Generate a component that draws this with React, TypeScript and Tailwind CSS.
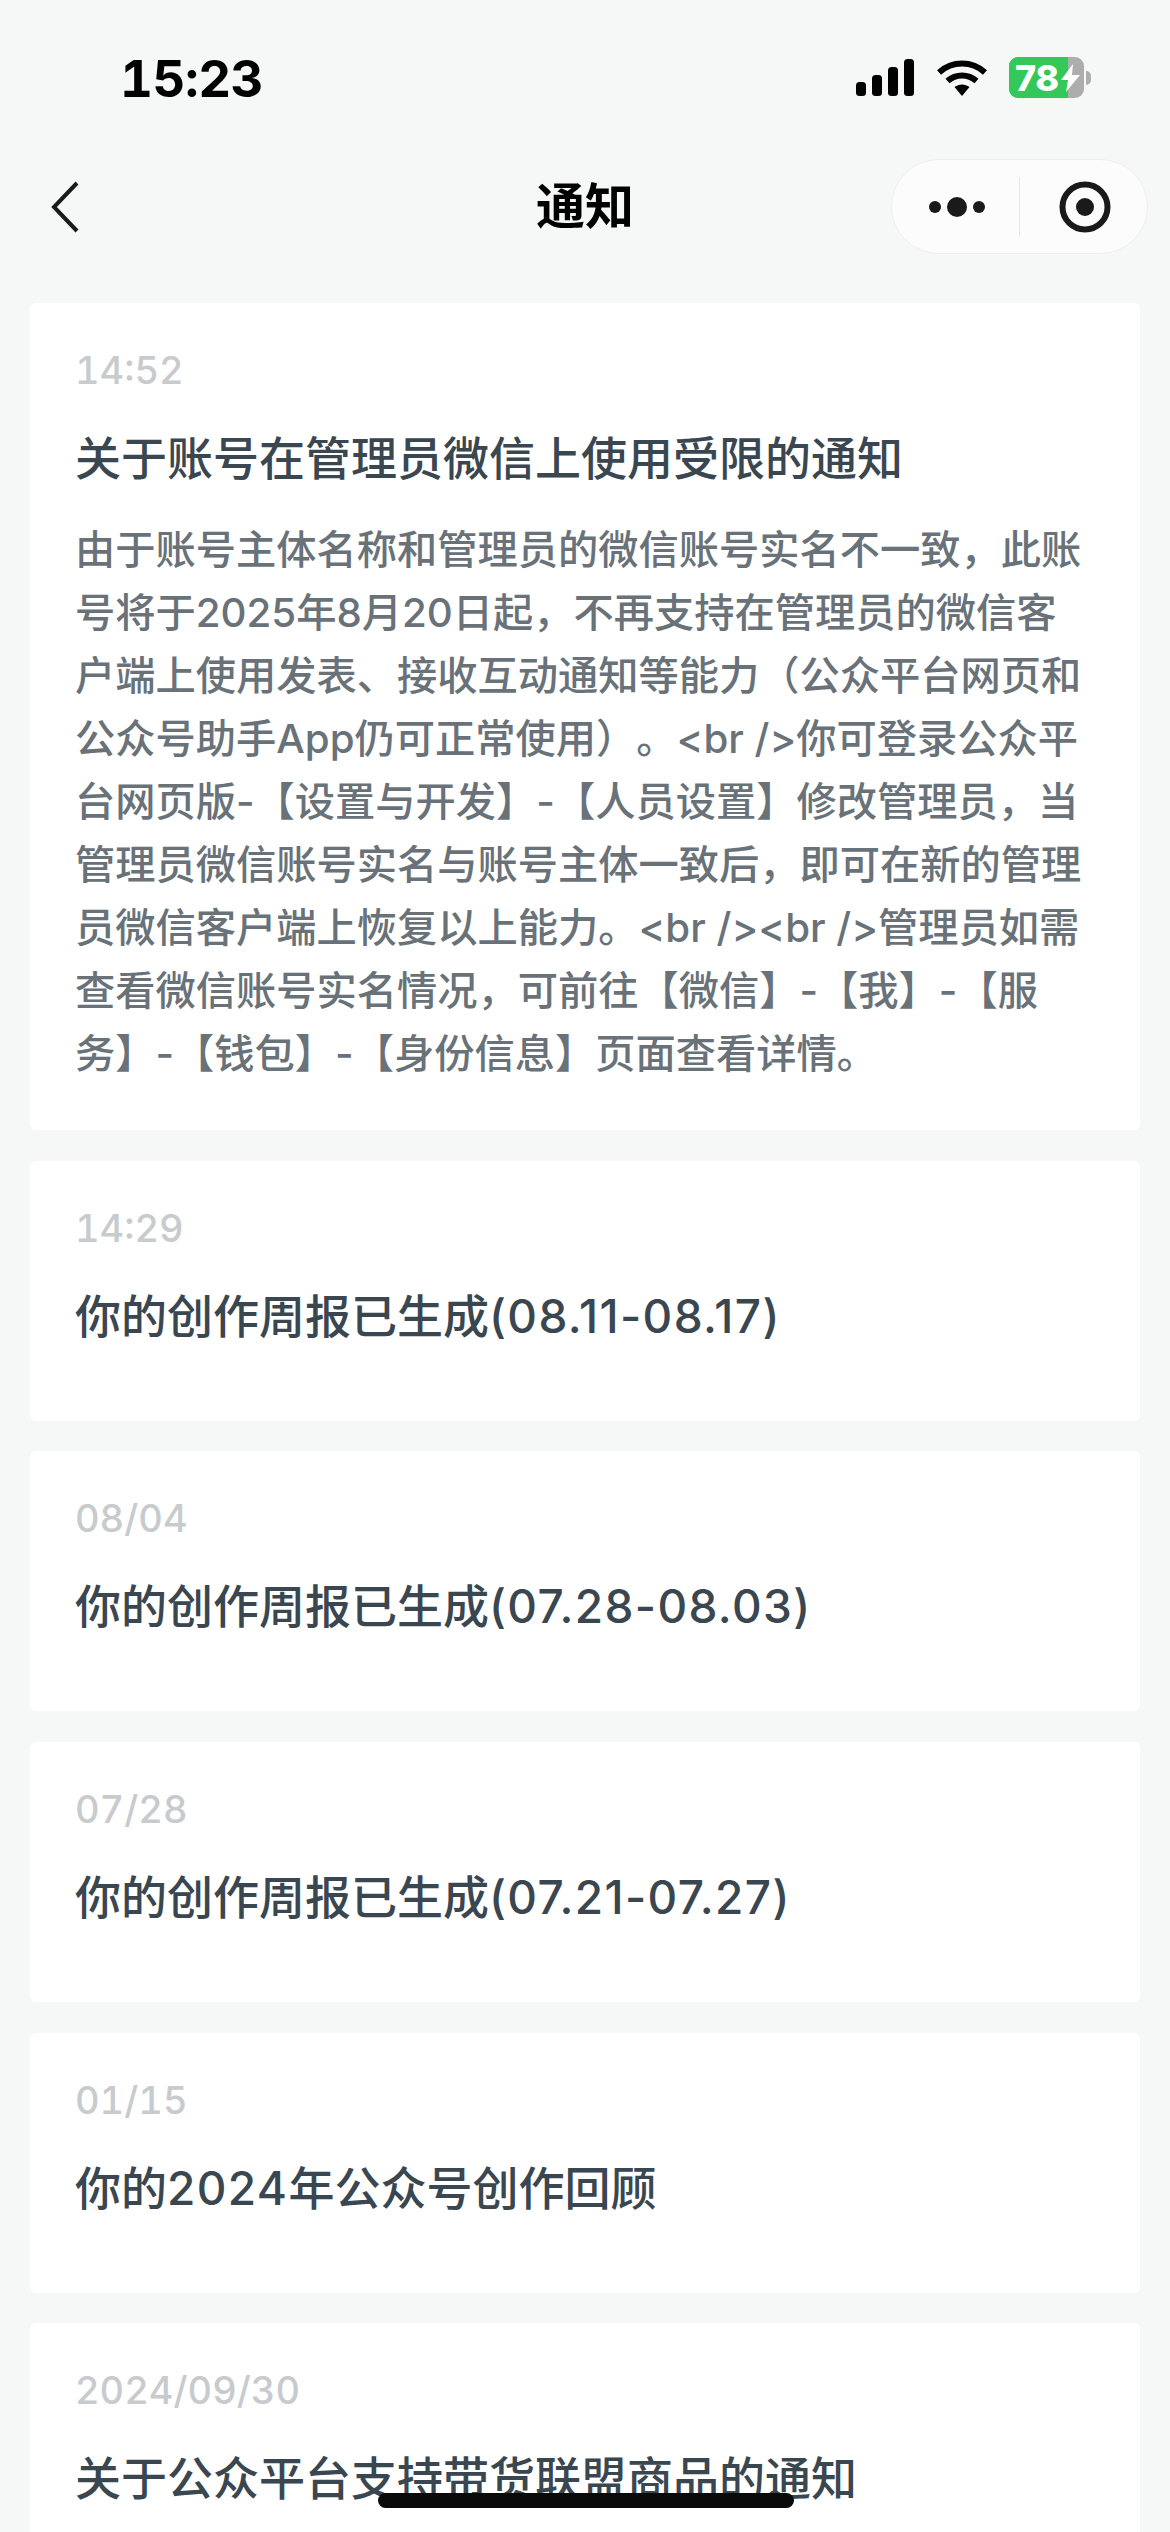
import React from 'react';

const FONT = 'font-["Inter","Noto_Sans_CJK_SC",sans-serif]';

const bodyLines = [
  '由于账号主体名称和管理员的微信账号实名不一致，此账',
  '号将于2025年8月20日起，不再支持在管理员的微信客',
  '户端上使用发表、接收互动通知等能力（公众平台网页和',
  '公众号助手App仍可正常使用）。<br />你可登录公众平',
  '台网页版-【设置与开发】-【人员设置】修改管理员，当',
  '管理员微信账号实名与账号主体一致后，即可在新的管理',
  '员微信客户端上恢复以上能力。<br /><br />管理员如需',
  '查看微信账号实名情况，可前往【微信】-【我】-【服',
  '务】-【钱包】-【身份信息】页面查看详情。',
];

const notices = [
  { time: '14:29', title: '你的创作周报已生成(08.11-08.17)' },
  { time: '08/04', title: '你的创作周报已生成(07.28-08.03)' },
  { time: '07/28', title: '你的创作周报已生成(07.21-07.27)' },
  { time: '01/15', title: '你的2024年公众号创作回顾' },
  { time: '2024/09/30', title: '关于公众平台支持带货联盟商品的通知' },
];

// digits in the titles sit a bit wider than Inter's default
const Mixed = ({ text }: { text: string }) => (
  <>
    {text.split(/([\x20-\x7e]+)/).map((part, i) =>
      i % 2 === 1 ? (
        <span key={i} className="tracking-[0.03em]">{part}</span>
      ) : (
        part
      ),
    )}
  </>
);

const StatusIcons = () => (
  <div className="flex items-center">
    <svg width="58" height="37" viewBox="0 0 58 37" fill="#000">
      <rect x="0" y="23" width="10" height="14" rx="3.5" />
      <rect x="16" y="16" width="10" height="21" rx="3.5" />
      <rect x="32" y="8" width="10" height="29" rx="3.5" />
      <rect x="48" y="0" width="10" height="37" rx="3.5" />
    </svg>
    <svg className="ml-[23px]" width="50" height="37" viewBox="0 0 50 37" fill="none">
      <path d="M2 13.5C15 1.5 35 1.5 48 13.5" stroke="#000" strokeWidth="6" />
      <path d="M10.5 22C19 14.5 31 14.5 39.5 22" stroke="#000" strokeWidth="6" />
      <path d="M17.5 28C22 24.5 28 24.5 32.500 28L25 37Z" fill="#000" />
    </svg>
    <div className="relative ml-[22px] flex h-[41px] w-[75px] items-center overflow-hidden rounded-[9px] bg-[#adadad]">
      <div className="absolute inset-y-0 left-0 w-[59px] bg-[#34c759]" />
      <span className="relative pl-[6px] text-[36px] leading-none font-extrabold text-white tracking-[-0.5px]">78</span>
      <svg className="absolute left-[52px] top-[7px]" width="19" height="28" viewBox="0 0 19 28" fill="#fff">
        <path d="M12 0 0 16h7L5 28 19 11h-8Z" />
      </svg>
    </div>
    <div className="ml-[2px] h-[14px] w-[5px] rounded-r-full bg-[#adadad]" />
  </div>
);

const Capsule = () => (
  <div className="flex h-[95px] w-[257px] items-center rounded-full border border-[#eeeeee] bg-[#fcfcfc]">
    <div className="flex flex-1 justify-center pl-[3px]">
      <svg width="56" height="20" viewBox="0 0 56 20" fill="#1a1a1a">
        <circle cx="6" cy="10" r="6" />
        <circle cx="28" cy="10" r="10" />
        <circle cx="50" cy="10" r="6" />
      </svg>
    </div>
    <div className="h-[60px] w-px bg-[#e6e6e6]" />
    <div className="flex flex-1 justify-center pl-[3px]">
      <svg width="52" height="52" viewBox="0 0 52 52" fill="none">
        <circle cx="26" cy="26" r="22.500" stroke="#1a1a1a" strokeWidth="6" />
        <circle cx="26" cy="26" r="9" fill="#1a1a1a" />
      </svg>
    </div>
  </div>
);

export default function App() {
  return (
    <div className={`relative h-[2532px] w-[1170px] overflow-hidden bg-[#f6f8f8] ${FONT}`}>
      <div className="flex h-[159px] items-start justify-between pl-[120px] pr-[79px] pt-[57px]">
        <div className="text-[51px] leading-[44px] font-bold tabular-nums tracking-[-0.5px] text-black">15:23</div>
        <StatusIcons />
      </div>

      <div className="relative flex h-[95px] items-center justify-end pr-[22px]">
        <svg className="absolute left-[50px] top-[22px]" width="30" height="52" viewBox="0 0 30 52" fill="none">
          <path d="M27 2 4 26l23 24" stroke="#1a1a1a" strokeWidth="4" />
        </svg>
        <div className="absolute inset-x-0 text-center text-[49px] leading-[60px] font-bold text-black">通知</div>
        <Capsule />
      </div>

      <div className="mt-[49px] flex flex-col gap-[30.700px] px-[30px]">
        <div className="rounded-[6px] bg-white pl-[45px] pt-[45px] pb-[45px]">
          <div className="text-[38px] leading-[44px] font-medium tabular-nums text-[#c8cbce]">14:52</div>
          <div className="mt-[36px] text-[46px] leading-[60px] font-medium text-[#3a4650]">关于账号在管理员微信上使用受限的通知</div>
          <div className="mt-[30px] text-[40.250px] leading-[63px] font-medium text-[#697279] [text-spacing-trim:space-all]">
            {bodyLines.map((line) => (
              <div key={line} className="whitespace-nowrap">{line}</div>
            ))}
          </div>
        </div>

        {notices.map((n) => (
          <div key={n.time} className="h-[260px] shrink-0 rounded-[6px] bg-white pl-[45px] pt-[45px]">
            <div className="text-[38px] leading-[44px] font-medium tabular-nums text-[#c8cbce]">{n.time}</div>
            <div className="mt-[36px] text-[46px] leading-[60px] font-medium text-[#3a4650]"><Mixed text={n.title} /></div>
          </div>
        ))}
      </div>

      <div className="absolute left-[378px] top-[2493px] h-[15px] w-[416px] rounded-full bg-[#0a0a0a]" />
    </div>
  );
}
